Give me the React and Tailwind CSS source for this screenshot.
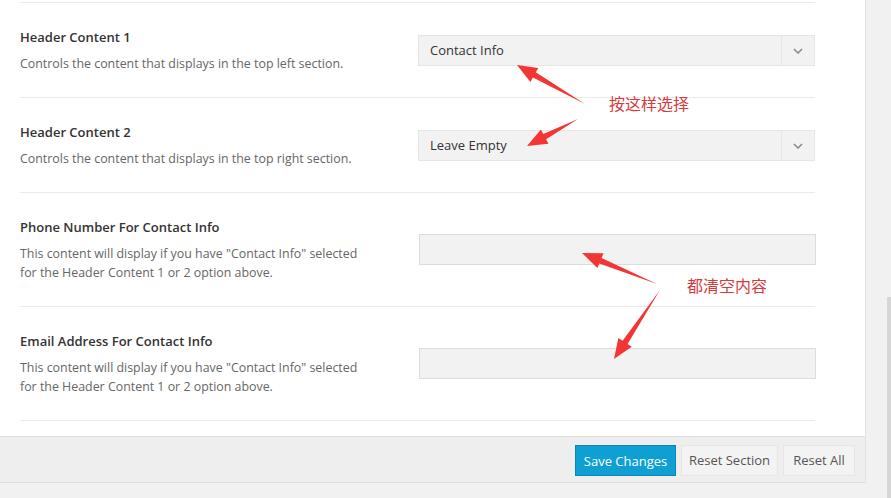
import React from 'react';

const font = { fontFamily: '"Open Sans", "Noto Sans", Arial, sans-serif' };

// arrow polygon from tail (x1,y1) to tip (x2,y2)
function arrowPoints(x1, y1, x2, y2, head = 20, half = 8, neck = 3) {
  const dx = x2 - x1;
  const dy = y2 - y1;
  const len = Math.hypot(dx, dy);
  const ux = dx / len;
  const uy = dy / len;
  const px = -uy;
  const py = ux;
  const bx = x2 - ux * head;
  const by = y2 - uy * head;
  const pts = [
    [x1, y1],
    [bx + px * neck, by + py * neck],
    [bx + px * half, by + py * half],
    [x2, y2],
    [bx - px * half, by - py * half],
    [bx - px * neck, by - py * neck],
  ];
  return pts.map((p) => p.map((v) => v.toFixed(1)).join(',')).join(' ');
}

function SelectBox({ label }) {
  return (
    <div className="ml-[398px] mt-[31px] w-[397px] h-[31px] bg-[#f3f2f2] border border-[#e6e6e6] flex items-center">
      <span className="flex-1 pl-[11px] text-[13px] text-[#333]">{label}</span>
      <span className="w-[33px] h-full border-l border-[#e6e6e6] flex items-center justify-center">
        <svg width="10" height="6" viewBox="0 0 10 6" fill="none">
          <path d="M1 1l4 4 4-4" stroke="#888" strokeWidth="1.5" />
        </svg>
      </span>
    </div>
  );
}

function Row({ title, desc, children, h }) {
  return (
    <div className={`relative border-b border-[#eaeaea] ${h}`}>
      <div className="absolute left-0 top-[25px]">
        <div className="text-[13px] leading-[18px] font-semibold text-[#333]">{title}</div>
        <div className="mt-[8px] text-[12.4px] leading-[19px] text-[#666]">{desc}</div>
      </div>
      {children}
    </div>
  );
}

export default function App() {
  return (
    <div className="relative w-[891px] h-[498px] bg-[#f1f1f1] overflow-hidden" style={font}>
      <div className="w-[866px] bg-white border-r border-[#e2e2e2]">
        <div className="mx-5 w-[795px]">
          <div className="h-[3px] border-b border-[#eaeaea]" />
          <Row h="h-[95px]" title="Header Content 1" desc="Controls the content that displays in the top left section.">
            <div className="pt-px">
              <SelectBox label="Contact Info" />
            </div>
          </Row>
          <Row h="h-[95px]" title="Header Content 2" desc="Controls the content that displays in the top right section.">
            <div className="pt-px">
              <SelectBox label="Leave Empty" />
            </div>
          </Row>
          <Row
            h="h-[114px]"
            title="Phone Number For Contact Info"
            desc={<>This content will display if you have "Contact Info" selected<br />for the Header Content 1 or 2 option above.</>}
          >
            <div className="pt-[41px] pl-[399px]">
              <div className="w-[397px] h-[31px] bg-[#f3f2f2] border border-[#dcdcdc]" />
            </div>
          </Row>
          <Row
            h="h-[114px]"
            title="Email Address For Contact Info"
            desc={<>This content will display if you have "Contact Info" selected<br />for the Header Content 1 or 2 option above.</>}
          >
            <div className="pt-[41px] pl-[399px]">
              <div className="w-[397px] h-[31px] bg-[#f3f2f2] border border-[#dcdcdc]" />
            </div>
          </Row>
        </div>
        <div className="h-[15px]" />
        <div className="h-[47px] bg-[#eeeeee] border-t border-b border-[#e0e0e0] flex items-center justify-end gap-[5px] pr-[10px] pt-[2px]">
          <button className="w-[101px] h-[31px] bg-[#0e9fd3] border border-[#0b86b4] text-white text-[13px] pt-[2px]">Save Changes</button>
          <button className="w-[97px] h-[31px] bg-[#f3f3f3] border border-[#e6e6e6] text-[#555] text-[13px]">Reset Section</button>
          <button className="w-[72px] h-[31px] bg-[#f3f3f3] border border-[#e6e6e6] text-[#555] text-[13px]">Reset All</button>
        </div>
      </div>

      <div className="absolute left-[887px] top-[297px] w-[4px] h-[201px] bg-[#d6d6d6]" />

      <svg className="absolute left-0 top-0 pointer-events-none" width="891" height="498">
        <polygon points={arrowPoints(585, 104, 517, 65)} fill="#f23636" />
        <polygon points={arrowPoints(578, 119, 527, 146)} fill="#f23636" />
        <polygon points={arrowPoints(657, 284, 582, 253)} fill="#f23636" />
        <polygon points={arrowPoints(660, 290, 614, 359)} fill="#f23636" />
      </svg>

      <div
        className="absolute left-[609px] top-[92px] text-[16px] leading-[22px] text-[#d8393d]"
        style={{ fontFamily: '"Noto Sans CJK SC", sans-serif' }}
      >
        按这样选择
      </div>
      <div
        className="absolute left-[687px] top-[274px] text-[16px] leading-[22px] text-[#d8393d]"
        style={{ fontFamily: '"Noto Sans CJK SC", sans-serif' }}
      >
        都清空内容
      </div>
    </div>
  );
}
